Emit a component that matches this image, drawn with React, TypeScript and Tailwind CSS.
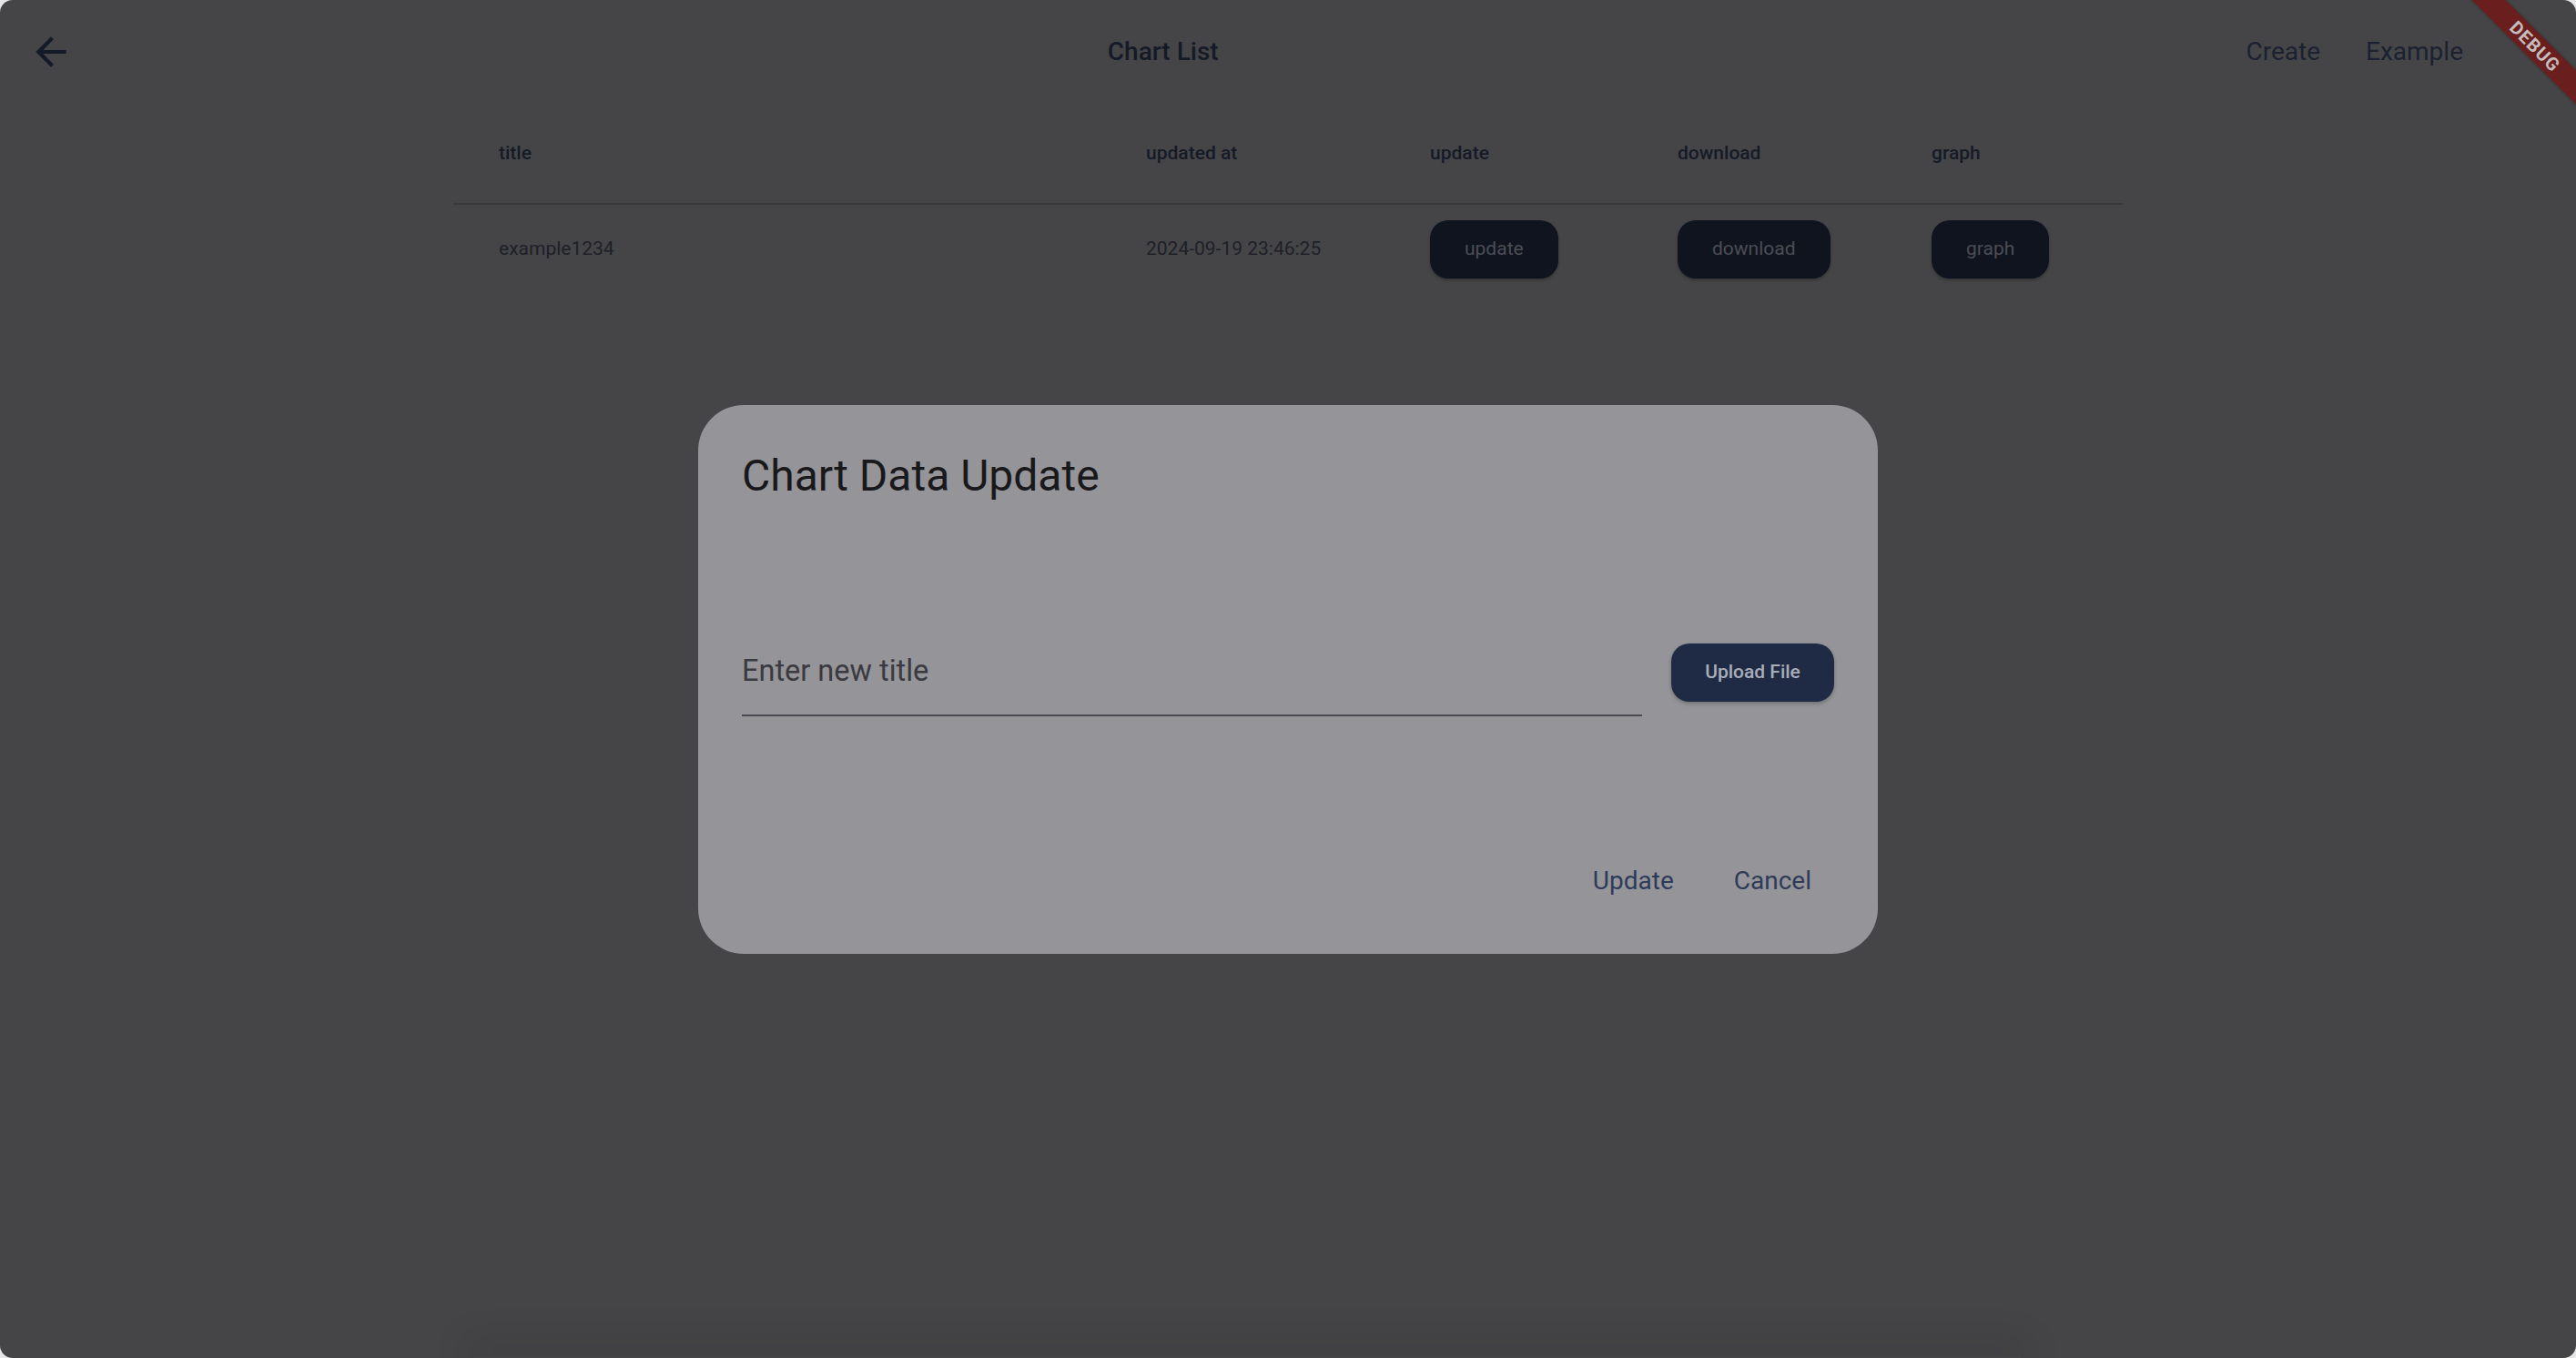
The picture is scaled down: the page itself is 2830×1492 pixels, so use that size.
import React from "react";

const columns = ["title", "updated at", "update", "download", "graph"];

function BackArrow() {
  return (
    <svg viewBox="0 0 24 24" className="w-[50px] h-[50px]" fill="#141a28">
      <path d="M20 11H7.83l5.59-5.59L12 4l-8 8 8 8 1.41-1.41L7.83 13H20v-2z" />
    </svg>
  );
}

function RowButton({ label }: { label: string }) {
  return (
    <button className="h-[64px] px-[38px] rounded-[20px] bg-[#10141f] text-[#4b4d55] text-[21px] shadow-[0_2px_3px_rgba(0,0,0,0.25)]">
      {label}
    </button>
  );
}

export default function App() {
  return (
    <div
      className="w-[2830px] h-[1492px] bg-[#e6e6e6]"
      style={{ fontFamily: "Roboto, 'Noto Sans', sans-serif" }}
    >
      <div className="relative w-full h-full rounded-[14px] overflow-hidden bg-[#454547] flex flex-col">
        {/* App bar */}
        <header className="h-[112px] pt-[2px] flex items-center">
          <div className="w-[112px] flex items-center justify-center">
            <BackArrow />
          </div>
          <div className="flex-1 text-center text-[28px] font-medium text-[#151a27]">
            Chart List
          </div>
          <nav className="flex items-center pr-[100px] text-[28px] text-[#1b2130]">
            <span className="px-[24px] mr-[2px]">Create</span>
            <span className="px-[24px]">Example</span>
          </nav>
        </header>

        {/* Table */}
        <div className="mx-auto w-[1834px]">
          <div className="h-[113px] pt-[2px] pl-[50px] grid grid-cols-[711px_312px_272px_279px_1fr] items-center border-b-2 border-[#39393b] text-[21px] font-medium text-[#151a27]">
            {columns.map((c) => (
              <div key={c}>{c}</div>
            ))}
          </div>
          <div className="h-[96px] pt-[2px] pl-[50px] grid grid-cols-[711px_312px_272px_279px_1fr] items-center text-[21px] text-[#1e2027]">
            <div>example1234</div>
            <div>2024-09-19 23:46:25</div>
            <div>
              <RowButton label="update" />
            </div>
            <div>
              <RowButton label="download" />
            </div>
            <div>
              <RowButton label="graph" />
            </div>
          </div>
        </div>

        {/* bottom shadow */}
        <div className="mt-auto ml-[520px] w-[1700px] h-[2px] shadow-[0_-6px_40px_10px_rgba(0,0,0,0.12)]" />

        {/* Dialog */}
        <div className="absolute inset-0 flex items-center justify-center">
          <div className="w-[1296px] h-[603px] rounded-[50px] bg-[#959498] px-[48px] pt-[48px] flex flex-col">
            <h2 className="text-[48px] leading-[60px] text-[#19191c]">Chart Data Update</h2>
            <div className="mt-[138px] flex items-start gap-[32px]">
              <div className="flex-1 h-[96px] border-b-2 border-[#4a4a52] flex items-center text-[32.5px] text-[#3a3a40]">
                Enter new title
              </div>
              <button className="h-[64px] w-[179px] mt-[16px] rounded-[20px] bg-[#1f2b45] text-[#a9adb9] text-[21px] font-medium shadow-[0_2px_4px_rgba(0,0,0,0.25)]">
                Upload File
              </button>
            </div>
            <div className="mt-auto mb-[59px] flex justify-end gap-[18px] pr-[25px] text-[28px] text-[#2e3b58]">
              <span className="px-[24px]">Update</span>
              <span className="pl-[24px]">Cancel</span>
            </div>
          </div>
        </div>

        {/* Debug banner */}
        <div className="absolute left-[2685px] top-[38px] w-[200px] h-[26px] rotate-45 bg-[#6a1e1e] shadow-[0_0_4px_rgba(0,0,0,0.3)] flex items-center justify-center text-[20px] font-bold tracking-[1px] text-[#c4bdbd]">
          DEBUG
        </div>
      </div>
    </div>
  );
}
